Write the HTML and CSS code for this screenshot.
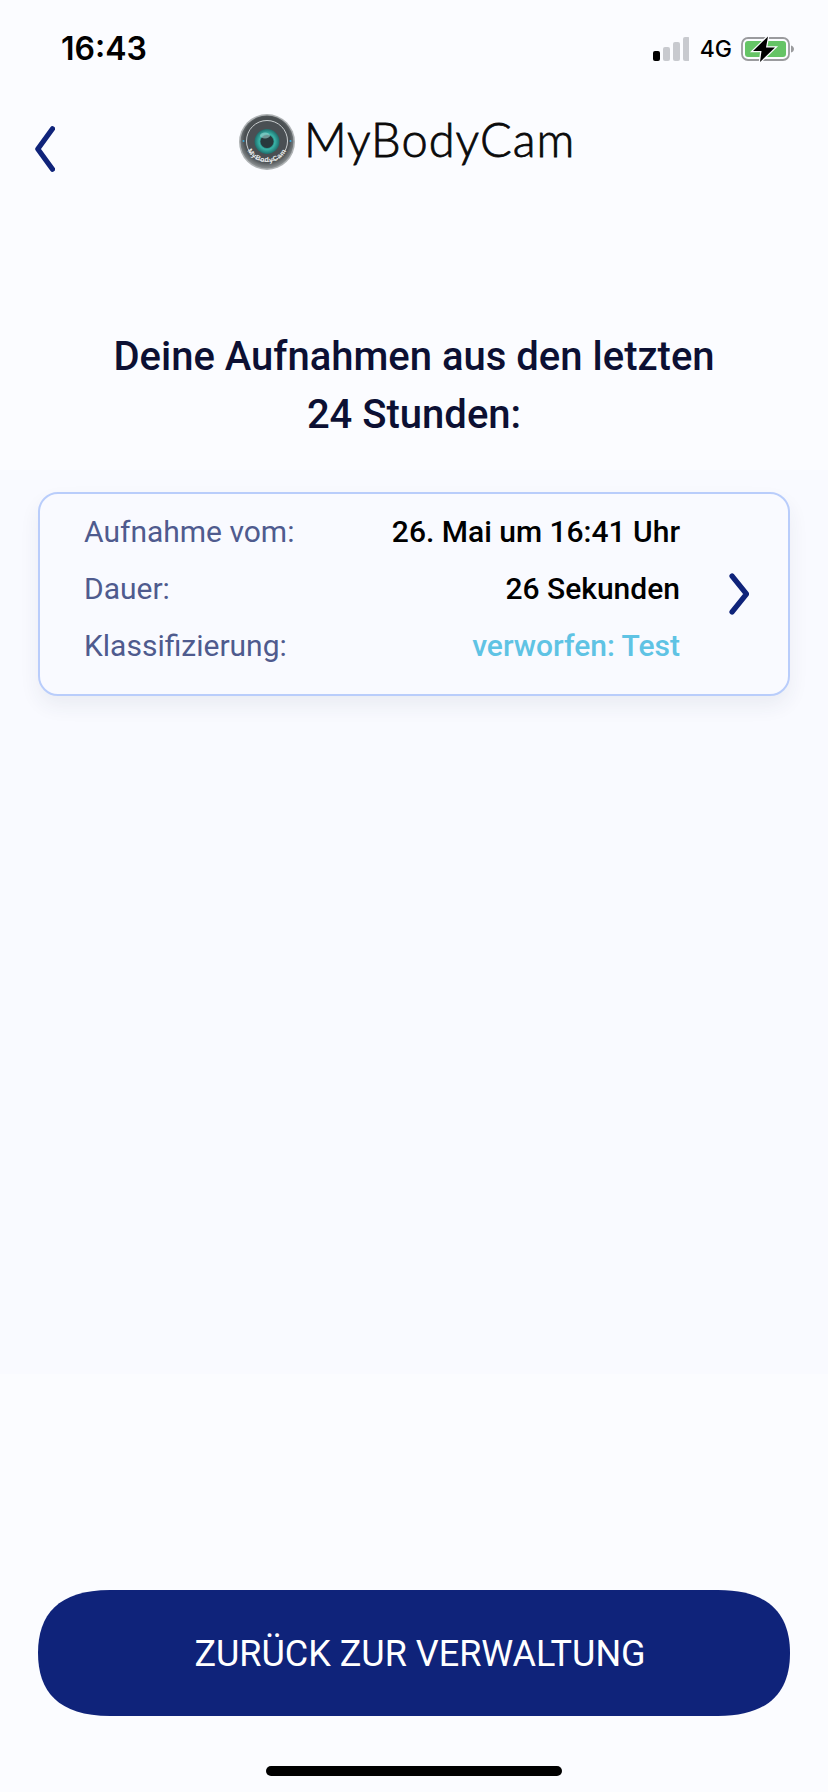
FILE: index.html
```html
<!DOCTYPE html>
<html lang="de">
<head>
<meta charset="utf-8">
<title>MyBodyCam</title>
<link rel="stylesheet" href="styles.css">
</head>
<body>
<div class="page">
  <div class="status">
    <span class="time">16:43</span>
    <div class="status-right">
      <svg class="signal" width="36" height="24" viewBox="0 0 36 24">
        <rect x="0" y="14" width="7" height="10" rx="2" fill="#000"/>
        <rect x="10" y="10" width="7" height="14" rx="2" fill="#c8cacf"/>
        <rect x="20" y="5" width="7" height="19" rx="2" fill="#c8cacf"/>
        <rect x="30" y="0" width="7" height="24" rx="2" fill="#c8cacf"/>
      </svg>
      <span class="net">4G</span>
      <svg class="battery" width="54" height="28" viewBox="0 0 54 28">
        <rect x="1" y="3" width="47" height="22" rx="6" fill="none" stroke="#9a9b9e" stroke-width="1.800"/>
        <rect x="4" y="6" width="41" height="16" rx="3" fill="#65c466"/>
        <path d="M50 10.500c2 .5 3 2 3 3.500s-1 3-3 3.500z" fill="#9a9b9e"/>
        <path d="M27 1.500 L12 16 H20.500 L19 27 L34 12.500 H25 Z" fill="#000" stroke="#fbfcff" stroke-width="2.500" paint-order="stroke"/>
      </svg>
    </div>
  </div>

  <header class="topbar">
    <svg class="back" width="20" height="46" viewBox="0 0 20 46"><path d="M17.500 2.800 L2.800 23 L17.500 43.200" fill="none" stroke="#0f237a" stroke-width="5.200" stroke-linecap="round" stroke-linejoin="round"/></svg>
    <div class="brand">
      <svg class="lens" width="56" height="56" viewBox="0 0 56 56">
        <defs>
          <radialGradient id="outer" cx="50%" cy="45%" r="55%">
            <stop offset="0" stop-color="#3c4144"/><stop offset=".78" stop-color="#4c5154"/><stop offset="1" stop-color="#8f9496"/>
          </radialGradient>
          <radialGradient id="iris" cx="50%" cy="50%" r="50%">
            <stop offset="0" stop-color="#1d3a3e"/><stop offset=".4" stop-color="#1d4a4d"/><stop offset=".62" stop-color="#39b5a8"/><stop offset="1" stop-color="#1f6d6c"/>
          </radialGradient>
          <path id="arc" d="M7 33 A22 22 0 0 0 49 33"/>
        </defs>
        <circle cx="28" cy="28" r="28" fill="#aeb2b4"/>
        <circle cx="28" cy="28" r="26.500" fill="url(#outer)"/>
        <circle cx="28" cy="27" r="20.500" fill="#4a4f53" stroke="#c9cdcf" stroke-width="1"/>
        <circle cx="28" cy="27.500" r="12.500" fill="url(#iris)"/>
        <circle cx="28" cy="27.500" r="6.500" fill="#28393c"/>
        <ellipse cx="26" cy="21.500" rx="5" ry="3" fill="#9fd6d0" opacity=".6"/>
        <circle cx="4.500" cy="27" r="1" fill="#39a9d8"/>
        <circle cx="51.500" cy="27" r="1" fill="#39a9d8"/>
        <text class="lens-text"><textPath href="#arc" startOffset="50%" text-anchor="middle">MyBodyCam</textPath></text>
      </svg>
      <span class="wordmark">MyBodyCam</span>
    </div>
  </header>

  <h1 class="title">Deine Aufnahmen aus den letzten<br>24 Stunden:</h1>

  <main class="list">
    <article class="card">
      <dl class="rows">
        <div class="row"><dt>Aufnahme vom:</dt><dd>26. Mai um 16:41 Uhr</dd></div>
        <div class="row"><dt>Dauer:</dt><dd>26 Sekunden</dd></div>
        <div class="row"><dt>Klassifizierung:</dt><dd class="state">verworfen: Test</dd></div>
      </dl>
      <svg class="next" width="22" height="42" viewBox="0 0 22 42"><path d="M5 3 L19.500 21 L5 39" fill="none" stroke="#0f237a" stroke-width="5.200" stroke-linecap="round" stroke-linejoin="round"/></svg>
    </article>
  </main>

  <footer class="foot">
    <button class="cta" type="button">ZURÜCK ZUR VERWALTUNG</button>
    <div class="home"></div>
  </footer>
</div>
</body>
</html>
```

FILE: styles.css
```css
* { box-sizing: border-box; }
html, body { margin: 0; padding: 0; }
body { background: #fbfcff; font-family: Roboto, "Liberation Sans", sans-serif; }
.page { width: 828px; height: 1792px; display: flex; flex-direction: column; overflow: hidden; }

.status { height: 107px; padding: 30px 33px 0 61px; display: flex; justify-content: space-between; align-items: flex-start; }
.time { font-family: Inter, sans-serif; font-weight: 600; font-size: 32px; line-height: 38px; color: #000; }
.status-right { display: flex; align-items: center; gap: 9px; height: 38px; }
.net { font-family: Inter, sans-serif; font-size: 23px; font-weight: 500; color: #000; margin-left: 2px; }

.topbar { height: 77px; padding: 7px 0 0 35px; position: relative; display: flex; align-items: center; }
.back { display: block; }
.brand { position: absolute; left: 239px; top: 7px; display: flex; align-items: center; gap: 9px; }
.lens { display: block; }
.lens-text { font-family: "Liberation Sans", sans-serif; font-size: 7px; font-weight: 700; fill: #e8eaeb; letter-spacing: .6px; }
.wordmark { font-family: Lato, sans-serif; font-weight: 300; font-size: 47px; line-height: 50px; color: #0a0a0a; letter-spacing: 1px; -webkit-text-stroke: .8px #0a0a0a; margin-bottom: 6px; }

.title { margin: 0; padding-top: 144px; font-size: 40px; line-height: 58px; font-weight: 500; text-align: center; color: #0c1033; }

.list { margin-top: 26px; height: 904px; background: #f9faff; padding: 22px 38px 0; }
.card { height: 204px; border: 2px solid #b9cdfb; border-radius: 20px; background: #f9faff; box-shadow: 0 10px 20px rgba(40, 50, 90, .07); display: flex; align-items: center; padding: 0 39px 0 44px; }
.rows { flex: 1; margin: 0 0 12px; display: flex; flex-direction: column; }
.row { display: flex; justify-content: space-between; align-items: center; height: 57px; font-size: 30px; }
dt { color: #4f5b8e; font-weight: 400; }
dd { margin: 0; color: #000; font-weight: 500; }
.state { color: #5fc3e4; }
.next { margin-left: 47px; display: block; }

.foot { flex: 1; display: flex; flex-direction: column; align-items: center; padding-top: 216px; }
.cta { width: 752px; height: 126px; border: 0; background: #0f237a; color: #fff; font-family: Roboto, sans-serif; font-size: 36px; font-weight: 400; padding: 2px 0 0 12px; clip-path: path("M0 63C0 25 20 0 72 0H680C732 0 752 25 752 63C752 101 732 126 680 126H72C20 126 0 101 0 63Z"); }
.home { width: 296px; height: 10px; border-radius: 5px; background: #000; margin-top: 50px; }
```
